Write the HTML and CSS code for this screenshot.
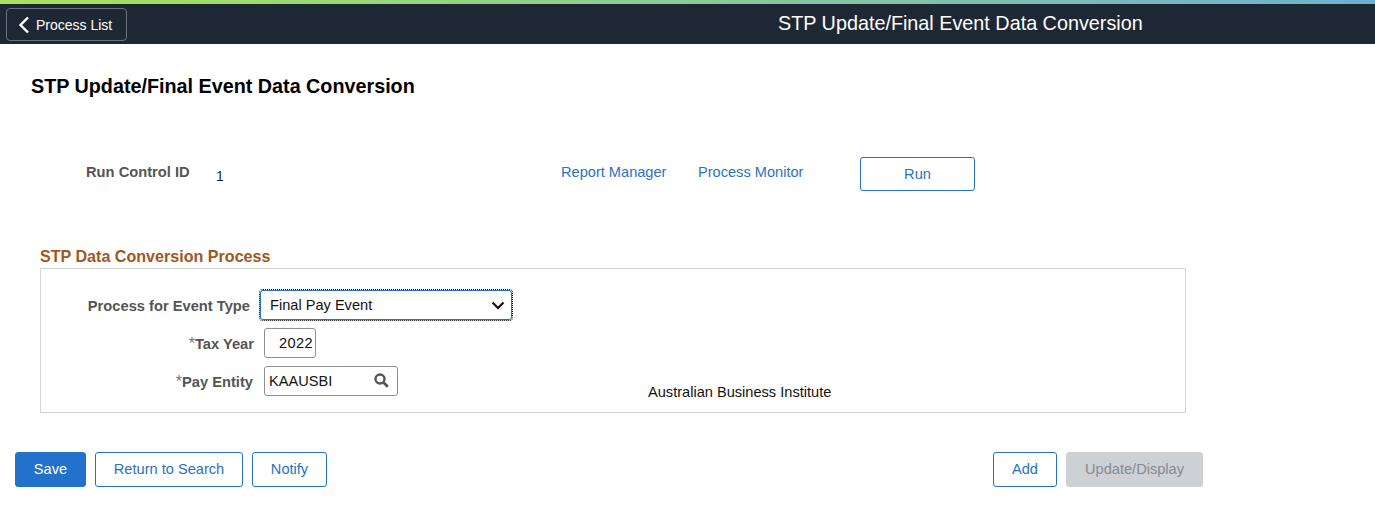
FILE: index.html
```html
<!DOCTYPE html>
<html lang="en">
<head>
<meta charset="utf-8">
<title>STP Update/Final Event Data Conversion</title>
<link rel="stylesheet" href="styles.css">
</head>
<body>
<div class="accent"></div>
<header class="banner">
  <a class="back" href="#">
    <svg class="back-icon" width="12" height="18" viewBox="0 0 12 18"><path d="M10 1.500 2.500 9l7.500 7.500" fill="none" stroke="#fff" stroke-width="2.400"/></svg>
    <span>Process List</span>
  </a>
  <div class="banner-title">STP Update/Final Event Data Conversion</div>
</header>
<main class="page">
  <h1 class="title">STP Update/Final Event Data Conversion</h1>
  <div class="run-row">
    <span class="run-label">Run Control ID</span>
    <span class="run-value">1</span>
    <a class="link link-report" href="#">Report Manager</a>
    <a class="link link-monitor" href="#">Process Monitor</a>
    <a class="btn btn-run" href="#">Run</a>
  </div>
  <h2 class="group-title">STP Data Conversion Process</h2>
  <section class="group">
    <div class="row row-type">
      <label class="field-label label-type">Process for Event Type</label>
      <div class="select">
        <span>Final Pay Event</span>
        <svg width="14" height="9" viewBox="0 0 14 9"><path d="M1.500 1.500 7 7l5.500-5.500" fill="none" stroke="#111" stroke-width="2.200"/></svg>
      </div>
    </div>
    <div class="row row-year">
      <label class="field-label label-year"><span class="req">*</span>Tax Year</label>
      <div class="input input-year">2022</div>
    </div>
    <div class="row row-entity">
      <label class="field-label label-entity"><span class="req">*</span>Pay Entity</label>
      <div class="input input-entity">
        <span>KAAUSBI</span>
        <svg width="15" height="15" viewBox="0 0 15 15"><circle cx="6" cy="6" r="4.500" fill="none" stroke="#555" stroke-width="2.400"/><path d="M9.500 9.500 13.800 13.800" stroke="#555" stroke-width="2.800"/></svg>
      </div>
      <span class="entity-name">Australian Business Institute</span>
    </div>
  </section>
  <footer class="actions">
    <a class="btn btn-primary btn-save" href="#">Save</a>
    <a class="btn btn-return" href="#">Return to Search</a>
    <a class="btn btn-notify" href="#">Notify</a>
    <a class="btn btn-add" href="#">Add</a>
    <span class="btn btn-disabled">Update/Display</span>
  </footer>
</main>
</body>
</html>
```
FILE: styles.css
```css
* { box-sizing: border-box; }
html, body { margin: 0; }
body {
  height: 513px;
  overflow: hidden;
  background: #fff;
  font-family: "Liberation Sans", Arial, sans-serif;
  font-size: 14.600px;
  color: #000;
}
a { text-decoration: none; }

.accent {
  height: 4px;
  background: linear-gradient(90deg, #a9e25d 0%, #6fb0d0 100%);
}
.banner {
  height: 40px;
  background: #1e2835;
  display: flex;
  align-items: center;
  padding-left: 6px;
  position: relative;
}
.back {
  width: 121px;
  height: 33px;
  margin-top: 1px;
  display: flex;
  align-items: center;
  gap: 6px;
  padding-left: 11px;
  border: 1px solid #6b7380;
  border-radius: 4px;
  color: #fff;
  font-size: 14px;
}
.banner-title {
  margin-left: 651px;
  margin-top: -2px;
  color: #fff;
  font-size: 19.800px;
  line-height: 40px;
  white-space: nowrap;
}

.page { padding-left: 15px; }
.title {
  margin: 31px 0 0 16px;
  font-size: 19.750px;
  line-height: 22px;
  font-weight: 700;
}

.run-row {
  display: flex;
  align-items: flex-start;
  height: 34px;
  margin-top: 60px;
}
.run-label {
  margin: 7px 0 0 71px;
  width: 130px;
  font-weight: 700;
  font-size: 14.700px;
  color: #555;
  line-height: 16px;
}
.run-value {
  margin-top: 11px;
  width: 345px;
  line-height: 16px;
  font-size: 14px;
  color: #00304a;
}
.link {
  margin-top: 7px;
  color: #2a71c9;
  line-height: 16px;
}
.link-report { width: 137px; }
.link-monitor { width: 162px; }

.btn {
  display: flex;
  align-items: center;
  justify-content: center;
  border: 1px solid #2272cc;
  border-radius: 3px;
  color: #2a71c9;
  background: #fff;
  font-size: 14.600px;
  padding-bottom: 1px;
}
.btn-run { width: 115px; height: 34px; margin-top: 0; }

.group-title {
  margin: 56px 0 0 25px;
  font-size: 16.100px;
  line-height: 18px;
  font-weight: 700;
  color: #a2561d;
}
.group {
  width: 1146px;
  height: 145px;
  margin: 3px 0 0 25px;
  border: 1px solid #d2d5da;
  padding-top: 21px;
}
.row { display: flex; align-items: center; position: relative; }
.row-type { height: 30px; }
.row-year { height: 30px; margin-top: 8px; }
.row-entity { height: 30px; margin-top: 8px; }
.field-label {
  font-weight: 700;
  color: #555;
  text-align: right;
  white-space: nowrap;
  padding-top: 2px;
  font-size: 14.700px;
}
.req { font-weight: 400; font-size: 16px; color: #777; }
.label-type { width: 209px; margin-right: 10px; }
.label-year { width: 213px; margin-right: 10px; }
.label-entity { width: 212px; margin-right: 11px; }

.select {
  width: 252px;
  height: 30px;
  display: flex;
  align-items: center;
  justify-content: space-between;
  padding: 0 6px 0 9px;
  border: 1px solid #2272cc;
  border-radius: 3px;
  outline: 1px dotted #000;
  color: #111;
}
.input {
  height: 30px;
  display: flex;
  align-items: center;
  border: 1px solid #8c9098;
  border-radius: 3px;
  color: #111;
  padding-bottom: 1px;
}
.input-year {
  width: 52px;
  justify-content: flex-end;
  padding-right: 2px;
  letter-spacing: 0.400px;
}
.input-entity {
  width: 134px;
  justify-content: space-between;
  padding: 0 8px 1px 4px;
}
.entity-name {
  position: absolute;
  left: 607px;
  top: 18px;
  line-height: 16px;
  color: #111;
}

.actions {
  display: flex;
  margin-top: 39px;
  height: 35px;
}
.actions .btn { height: 35px; }
.btn-primary { background: #2272cc; color: #fff; }
.btn-save { width: 71px; margin-right: 9px; }
.btn-return { width: 148px; margin-right: 9px; }
.btn-notify { width: 75px; margin-right: 666px; }
.btn-add { width: 64px; margin-right: 9px; }
.btn-disabled {
  width: 137px;
  background: #cdd1d6;
  border-color: #cdd1d6;
  color: #858b92;
}
```
